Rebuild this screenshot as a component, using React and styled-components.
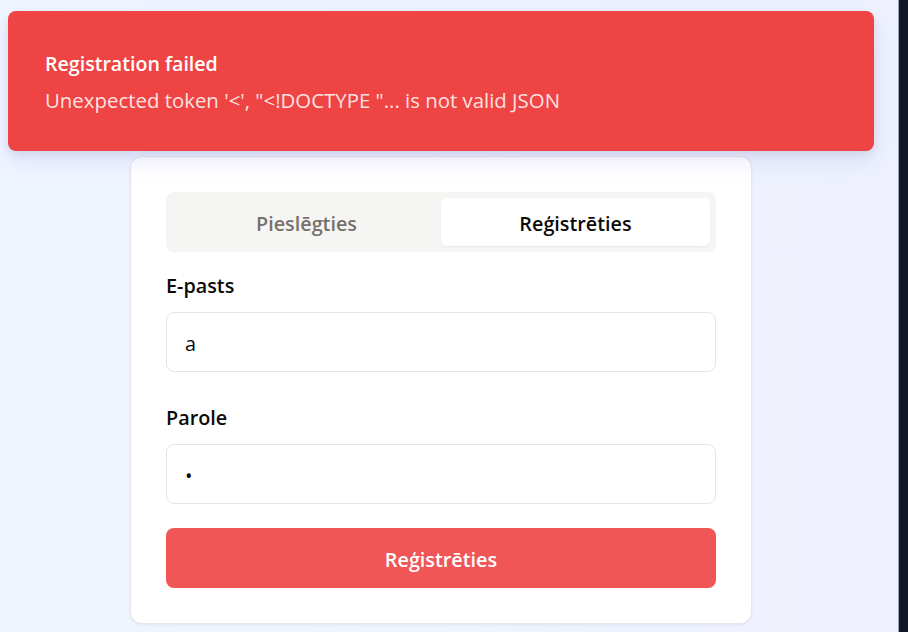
import React from "react";
import styled, { createGlobalStyle } from "styled-components";

const GlobalStyle = createGlobalStyle`
  html, body {
    margin: 0;
    padding: 0;
  }
  body {
    font-family: "Open Sans", "Noto Sans", sans-serif;
    color: #0c0a09;
  }
  * {
    box-sizing: border-box;
  }
`;

const Screen = styled.div`
  display: flex;
  width: 908px;
  height: 632px;
  overflow: hidden;
`;

const Main = styled.main`
  position: relative;
  flex: 1;
  background: linear-gradient(90deg, #eff5ff 0%, #eef1fd 100%);
  padding-top: 156px;
  padding-left: 130px;
`;

const EdgePanel = styled.aside`
  width: 10px;
  background: #111827;
  border-left: 1px solid #9ca3af;
`;

const Toast = styled.div`
  position: absolute;
  top: 11px;
  left: 8px;
  width: 866px;
  height: 140px;
  background: #ef4444;
  border-radius: 8px;
  padding: 38px 37px;
  box-shadow: 0 10px 24px rgba(99, 102, 241, 0.12), 0 4px 8px rgba(15, 23, 42, 0.08);
  z-index: 2;
`;

const ToastTitle = styled.div`
  color: #ffffff;
  font-size: 19.6px;
  font-weight: 600;
  line-height: 30px;
`;

const ToastMessage = styled.div`
  margin-top: 6px;
  color: rgba(255, 255, 255, 0.86);
  font-size: 20.4px;
  line-height: 30px;
`;

const Card = styled.section`
  width: 622px;
  background: #ffffff;
  border: 1px solid #e5e7eb;
  border-radius: 12px;
  padding: 35px;
  box-shadow: 0 1px 3px rgba(15, 23, 42, 0.06);
  display: flex;
  flex-direction: column;
`;

const Tabs = styled.div`
  display: grid;
  grid-template-columns: 1fr 1fr;
  height: 60px;
  padding: 6px;
  background: #f5f5f4;
  border-radius: 8px;
  margin-bottom: 20px;
`;

const Tab = styled.button`
  border: none;
  border-radius: 6px;
  padding: 2px 0 0;
  font-family: inherit;
  font-size: 19.8px;
  font-weight: 600;
  cursor: pointer;
  background: ${(p) => (p.$active ? "#ffffff" : "transparent")};
  color: ${(p) => (p.$active ? "#0c0a09" : "#78716c")};
  box-shadow: ${(p) => (p.$active ? "0 1px 2px rgba(0,0,0,0.06)" : "none")};
`;

const Field = styled.div`
  display: flex;
  flex-direction: column;
  gap: 12px;
  margin-bottom: ${(p) => p.$gap || 32}px;
`;

const Label = styled.label`
  font-size: 19.8px;
  font-weight: 600;
  line-height: 28px;
  color: #0c0a09;
`;

const Input = styled.input`
  height: 60px;
  width: 100%;
  border: 1px solid #e5e5e5;
  border-radius: 8px;
  padding: 2px 18px 0;
  font-family: inherit;
  font-size: 19.8px;
  color: #0c0a09;
  background: #ffffff;
  outline: none;
`;

const Submit = styled.button`
  height: 60px;
  border: none;
  border-radius: 8px;
  padding: 2px 0 0;
  background: #ef4444;
  opacity: 0.9;
  color: #ffffff;
  font-family: inherit;
  font-size: 19.8px;
  font-weight: 600;
  cursor: pointer;
`;

export default function App() {
  return (
    <>
      <GlobalStyle />
      <Screen>
        <Main>
          <Toast role="alert">
            <ToastTitle>Registration failed</ToastTitle>
            <ToastMessage>
              Unexpected token '&lt;', "&lt;!DOCTYPE "... is not valid JSON
            </ToastMessage>
          </Toast>
          <Card>
            <Tabs>
              <Tab>Pieslēgties</Tab>
              <Tab $active>Reģistrēties</Tab>
            </Tabs>
            <Field>
              <Label htmlFor="email">E-pasts</Label>
              <Input id="email" type="text" defaultValue="a" />
            </Field>
            <Field $gap={24}>
              <Label htmlFor="password">Parole</Label>
              <Input id="password" type="password" defaultValue="a" />
            </Field>
            <Submit>Reģistrēties</Submit>
          </Card>
        </Main>
        <EdgePanel />
      </Screen>
    </>
  );
}
